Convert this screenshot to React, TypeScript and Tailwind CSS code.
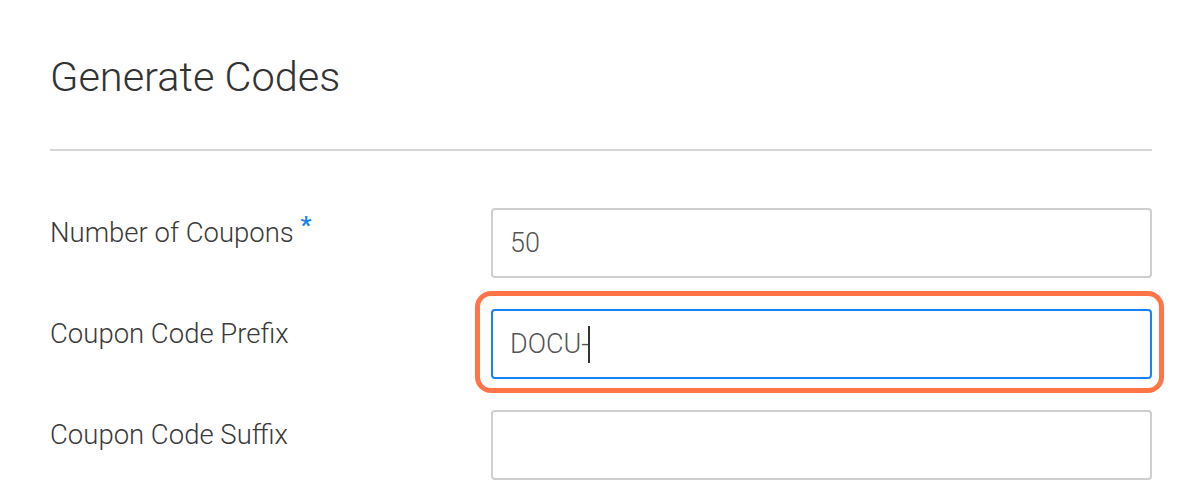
export default function App() {
  return (
    <div className="min-h-[493px] w-full bg-white font-['Roboto',sans-serif] text-[#333]">
      <div className="pl-[50px] pr-[48px]">
        <h1 className="pt-[51px] text-[41.5px] font-light leading-[52px] text-[#333]">Generate Codes</h1>
        <div className="mt-[46px] h-[2px] bg-[#d6d6d6]" />

        <div className="mt-[57px] flex flex-col gap-[31px]">
          <div className="flex items-start">
            <label className="w-[441px] pt-[6px] text-[27.5px] font-light leading-[38px] text-[#3a3a3a]">
              Number of Coupons <span className="relative -top-[9px] text-[24px] font-bold text-[#1a82f7]">*</span>
            </label>
            <div className="flex h-[70px] flex-1 items-center rounded-[4px] border-[2px] border-[#cfcfcf] px-[17px] text-[27px] font-light text-[#555]">
              50
            </div>
          </div>

          <div className="flex items-start">
            <label className="w-[441px] pt-[6px] text-[27.5px] font-light leading-[38px] text-[#3a3a3a]">
              Coupon Code Prefix
            </label>
            <div className="relative flex-1">
              <div className="absolute -top-[18px] -bottom-[14px] -left-[16px] -right-[12px] rounded-[16px] border-[5px] border-[#ff7548]" />
              <div className="flex h-[70px] items-center rounded-[4px] border-[2px] border-[#1a82f7] px-[17px] text-[27px] font-light text-[#555]">
                DOCU-<span className="-ml-[1px] inline-block h-[37px] w-[2px] bg-[#333]" />
              </div>
            </div>
          </div>

          <div className="flex items-start">
            <label className="w-[441px] pt-[6px] text-[27.5px] font-light leading-[38px] text-[#3a3a3a]">
              Coupon Code Suffix
            </label>
            <div className="h-[70px] flex-1 rounded-[4px] border-[2px] border-[#cfcfcf]" />
          </div>
        </div>
      </div>
    </div>
  );
}
